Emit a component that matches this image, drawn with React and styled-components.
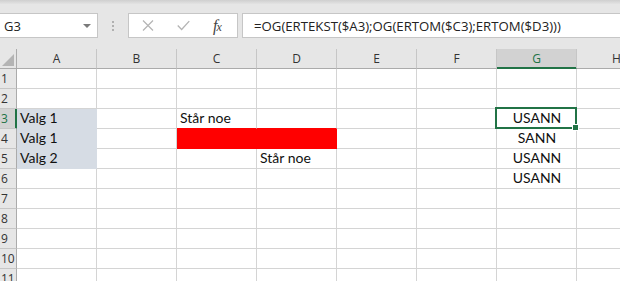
import React from "react";
import styled, { createGlobalStyle } from "styled-components";

const GlobalStyle = createGlobalStyle`
  html, body {
    margin: 0;
    padding: 0;
    background: #fff;
    overflow: hidden;
  }
`;

const GREEN = "#217346";
const GRID = "#d4d4d4";
const COLS = ["A", "B", "C", "D", "E", "F", "G", "H"];
const ROWS = [1, 2, 3, 4, 5, 6, 7, 8, 9, 10, 11];

const data = {
  3: { A: "Valg 1", C: "Står noe", G: "USANN" },
  4: { A: "Valg 1", G: "SANN" },
  5: { A: "Valg 2", D: "Står noe", G: "USANN" },
  6: { G: "USANN" },
};

const fills = {
  A3: "#d6dce4",
  A4: "#d6dce4",
  A5: "#d6dce4",
  C4: "#ff0000",
  D4: "#ff0000",
};

const selected = { col: "G", row: 3 };

export default function App() {
  return (
    <Page>
      <GlobalStyle />
      <Toolbar>
        <TopStrip />
        <BarRow>
          <NameBox>
            <span>G3</span>
            <Caret />
          </NameBox>
          <Grip>
            <i />
            <i />
            <i />
          </Grip>
          <Controls>
            <IconSlot>
              <svg width="12" height="11" viewBox="0 0 12 11">
                <path d="M1 0.5 L11 10.5 M11 0.5 L1 10.5" stroke="#b4b4b4" strokeWidth="1.2" fill="none" />
              </svg>
            </IconSlot>
            <IconSlot>
              <svg width="14" height="11" viewBox="0 0 14 11">
                <path d="M0.8 5.5 L5 9.8 L13.2 0.8" stroke="#b4b4b4" strokeWidth="1.4" fill="none" />
              </svg>
            </IconSlot>
            <Fx>
              f<sub>x</sub>
            </Fx>
          </Controls>
          <FormulaInput>=OG(ERTEKST($A3);OG(ERTOM($C3);ERTOM($D3)))</FormulaInput>
        </BarRow>
      </Toolbar>

      <Sheet>
        <Corner>
          <SelectAll />
        </Corner>
        {COLS.map((c) => (
          <ColHead key={c} $active={c === selected.col}>
            {c}
          </ColHead>
        ))}
        {ROWS.map((r) => (
          <React.Fragment key={r}>
            <RowHead $active={r === selected.row}>{r}</RowHead>
            {COLS.map((c) => {
              const fill = fills[c + r];
              const below = fills[c + (r + 1)];
              const text = data[r] && data[r][c];
              const isSel = c === selected.col && r === selected.row;
              return (
                <Cell
                  key={c}
                  $fill={fill}
                  $lineBottom={fill || (below === "#ff0000" ? below : undefined)}
                  $center={c === "G"}
                  $selected={isSel}
                >
                  {text}
                  {isSel && <Handle />}
                </Cell>
              );
            })}
          </React.Fragment>
        ))}
      </Sheet>
    </Page>
  );
}

const Page = styled.div`
  width: 620px;
  height: 281px;
  overflow: hidden;
  background: #fff;
`;

const Toolbar = styled.div`
  height: 49px;
  background: #e6e6e6;
  display: flex;
  flex-direction: column;
`;

const TopStrip = styled.div`
  height: 4px;
  background: linear-gradient(#cfcfcf, #e3e3e3);
`;

const BarRow = styled.div`
  display: flex;
  align-items: center;
  margin-top: 9px;
  height: 25px;
`;

const NameBox = styled.div`
  box-sizing: border-box;
  width: 98px;
  height: 25px;
  background: #fff;
  border: 1px solid #c6c6c6;
  border-left: none;
  display: flex;
  align-items: center;
  justify-content: space-between;
  padding: 0 6px 0 4px;
  font-family: "Open Sans", "Noto Sans", sans-serif;
  font-size: 13px;
  color: #222;
`;

const Caret = styled.span`
  width: 0;
  height: 0;
  border-left: 4px solid transparent;
  border-right: 4px solid transparent;
  border-top: 4px solid #7a7a7a;
`;

const Grip = styled.div`
  width: 30px;
  display: flex;
  flex-direction: column;
  align-items: center;
  gap: 2px;
  i {
    width: 2px;
    height: 2px;
    background: #b0b0b0;
  }
`;

const Controls = styled.div`
  box-sizing: border-box;
  width: 110px;
  height: 25px;
  background: #fff;
  border: 1px solid #c6c6c6;
  display: flex;
  align-items: center;
  padding-left: 13px;
  gap: 22px;
`;

const IconSlot = styled.div`
  display: flex;
  align-items: center;
  width: 13px;
`;

const Fx = styled.div`
  font-family: "Liberation Serif", serif;
  font-style: italic;
  font-size: 16px;
  color: #444;
  margin-left: 1px;
  letter-spacing: -1px;
  sub {
    font-size: 12px;
    vertical-align: 0;
  }
`;

const FormulaInput = styled.div`
  box-sizing: border-box;
  flex: 1;
  margin-left: 4px;
  margin-right: -4px;
  height: 25px;
  background: #fff;
  border: 1px solid #c6c6c6;
  display: flex;
  align-items: center;
  padding-left: 11px;
  font-family: "Open Sans", "Noto Sans", sans-serif;
  font-size: 13.2px;
  color: #222;
  white-space: nowrap;
`;

const Sheet = styled.div`
  display: grid;
  grid-template-columns: 17px repeat(8, 80px);
  grid-auto-rows: 20px;
`;

const Corner = styled.div`
  box-sizing: border-box;
  background: #e6e6e6;
  border-right: 1px solid #ababab;
  border-bottom: 1px solid #ababab;
  display: flex;
  align-items: flex-end;
  justify-content: flex-end;
  padding: 0 2px 2px 0;
`;

const SelectAll = styled.div`
  width: 0;
  height: 0;
  border-left: 12px solid transparent;
  border-bottom: 12px solid #b4b4b4;
`;

const ColHead = styled.div`
  box-sizing: border-box;
  background: ${(p) => (p.$active ? "#d2d2d2" : "#e6e6e6")};
  border-right: 1px solid #c6c6c6;
  border-bottom: 1px solid ${(p) => (p.$active ? GREEN : "#ababab")};
  box-shadow: ${(p) => (p.$active ? `inset 0 -1px 0 ${GREEN}` : "none")};
  color: ${(p) => (p.$active ? GREEN : "#333")};
  font-family: "Open Sans", "Noto Sans", sans-serif;
  font-size: 12px;
  display: flex;
  align-items: center;
  justify-content: center;
  padding-bottom: 1px;
`;

const RowHead = styled.div`
  box-sizing: border-box;
  background: ${(p) => (p.$active ? "#d2d2d2" : "#e6e6e6")};
  border-right: 1px solid ${(p) => (p.$active ? GREEN : "#ababab")};
  border-bottom: 1px solid #c6c6c6;
  box-shadow: ${(p) => (p.$active ? `inset -1px 0 0 ${GREEN}` : "none")};
  color: ${(p) => (p.$active ? GREEN : "#333")};
  font-family: "Open Sans", "Noto Sans", sans-serif;
  font-size: 12px;
  display: flex;
  align-items: center;
  padding-left: 1px;
  overflow: hidden;
`;

const Cell = styled.div`
  box-sizing: border-box;
  position: relative;
  z-index: ${(p) => (p.$selected ? 2 : "auto")};
  background: ${(p) => p.$fill || "#fff"};
  border-right: 1px solid ${(p) => p.$fill || GRID};
  border-bottom: 1px solid ${(p) => p.$lineBottom || GRID};
  display: flex;
  align-items: flex-end;
  justify-content: ${(p) => (p.$center ? "center" : "flex-start")};
  padding: 0 2px 1px 3px;
  font-family: "Lato", "Liberation Sans", sans-serif;
  font-size: 14px;
  line-height: 18px;
  color: #111;
  white-space: nowrap;

  &::after {
    content: "";
    display: ${(p) => (p.$selected ? "block" : "none")};
    position: absolute;
    top: -2px;
    left: -2px;
    right: -1px;
    bottom: -1px;
    border: 2px solid ${GREEN};
    pointer-events: none;
  }
`;

const Handle = styled.span`
  position: absolute;
  right: -3px;
  bottom: -3px;
  width: 5px;
  height: 5px;
  background: ${GREEN};
  border: 1px solid #fff;
  z-index: 3;
`;
